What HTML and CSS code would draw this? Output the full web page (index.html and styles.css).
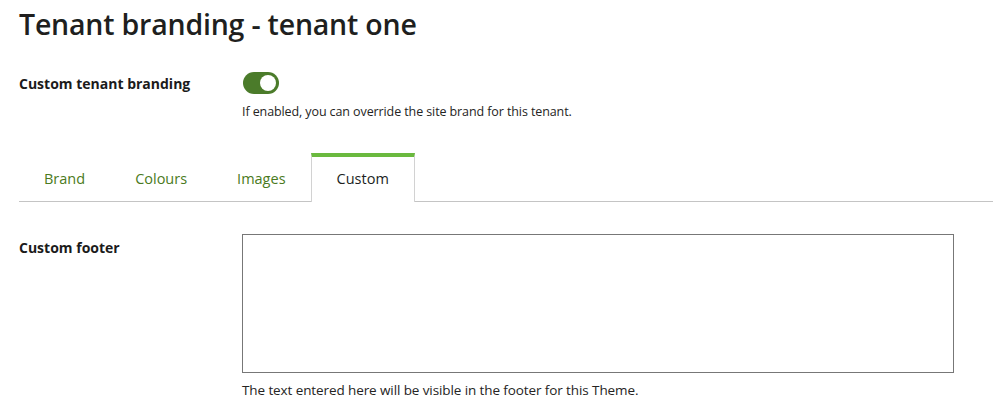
FILE: index.html
```html
<!DOCTYPE html>
<html>
<head>
<meta charset="utf-8">
<link rel="stylesheet" href="styles.css">
</head>
<body>
<div class="page">
  <h1 class="title">Tenant branding - tenant one</h1>
  <div class="row row-toggle">
    <div class="label">Custom tenant branding</div>
    <div class="field">
      <span class="switch"><span class="knob"></span></span>
      <div class="help">If enabled, you can override the site brand for this tenant.</div>
    </div>
  </div>
  <div class="tabs">
    <div class="tab">Brand</div>
    <div class="tab">Colours</div>
    <div class="tab">Images</div>
    <div class="tab active">Custom</div>
  </div>
  <div class="row row-footer">
    <div class="label">Custom footer</div>
    <div class="field">
      <textarea class="area"></textarea>
      <div class="help help2">The text entered here will be visible in the footer for this Theme.</div>
    </div>
  </div>
</div>
</body>
</html>
```
FILE: styles.css
```css
html, body { margin: 0; padding: 0; background: #fff; }
body { font-family: "Open Sans", "Noto Sans", sans-serif; color: #212121; }
.page { padding: 0 0 0 19px; }
.title { margin: 0; padding-top: 5px; font-size: 28.5px; font-weight: 600; line-height: 38px; color: #201f1e; letter-spacing: -0.2px; }
.row { display: flex; }
.row-toggle { margin-top: 29px; }
.label { width: 223px; font-size: 14px; font-weight: 700; color: #1b1b1b; }
.row-toggle .label { padding-top: 2px; }
.field { display: flex; flex-direction: column; }
.switch { display: flex; justify-content: flex-end; align-items: center; width: 36px; height: 22px; box-sizing: border-box; border-radius: 11px; background: #4b7b2a; padding: 3px; margin-left: 1px; }
.knob { width: 16px; height: 16px; border-radius: 50%; background: #fff; }
.help { font-size: 12.5px; color: #252423; margin-top: 9px; letter-spacing: -0.1px; }
.tabs { display: flex; margin-top: 33px; border-bottom: 1px solid #c4c4c4; }
.tab { padding: 0 25px; height: 44px; line-height: 44px; font-size: 14.5px; color: #4a7a21; border-top: 4px solid transparent; }
.tab.active { color: #201f1e; border-top-color: #6ab93e; border-left: 1px solid #d2d2d2; border-right: 1px solid #d2d2d2; margin-bottom: -1px; background: #fff; height: 45px; }
.row-footer { margin-top: 32px; }
.row-footer .label { padding-top: 4px; }
.area { width: 712px; height: 139px; box-sizing: border-box; border: 1px solid #777; margin: 0; resize: none; display: block; }
.help2 { margin-top: 8px; font-size: 13.5px; }
```
